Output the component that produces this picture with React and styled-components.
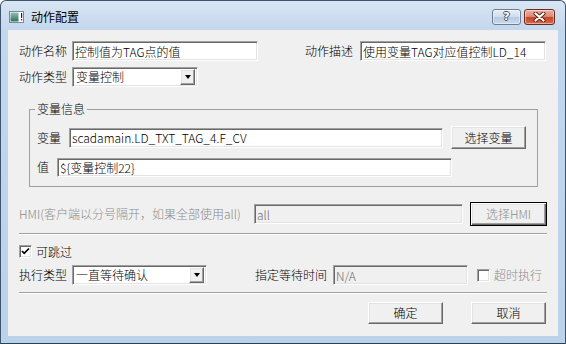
import React from 'react';
import styled, { createGlobalStyle, css } from 'styled-components';

const UI = `"Noto Sans CJK SC", "Noto Sans", "Liberation Sans", sans-serif`;

const Global = createGlobalStyle`
  html, body { margin: 0; padding: 0; background: #ffffff; }
  body { font-family: ${UI}; font-size: 12px; color: #000; }
  * { box-sizing: border-box; }
`;

const sunken = css`
  border: 1px solid;
  border-color: #a0a0a0 #ffffff #ffffff #a0a0a0;
  box-shadow: inset 1px 1px 0 #696969, inset -1px -1px 0 #e3e3e3;
`;

const raised = css`
  border: 1px solid;
  border-color: #ffffff #696969 #696969 #ffffff;
  box-shadow: inset -1px -1px 0 #a0a0a0, inset 1px 1px 0 #e3e3e3;
`;

const Window = styled.div`
  width: 566px;
  height: 344px;
  border: 1px solid #3e5570;
  border-bottom-color: #24434f;
  border-radius: 6px 6px 0 0;
  background: linear-gradient(180deg, #d9e5f3 0px, #c3d7ed 29px, #bcd2ea 100%);
  padding: 0 7px 7px 7px;
  display: flex;
  flex-direction: column;
  overflow: hidden;
`;

const TitleBar = styled.div`
  height: 29px;
  padding-top: 3px;
  display: flex;
  align-items: center;
`;

const TitleIcon = styled.svg`
  width: 15px;
  height: 12px;
  margin-left: 1px;
  flex: none;
`;

const TitleText = styled.span`
  margin-left: 7px;
  font-size: 12px;
  line-height: 14px;
  color: #000;
  flex: 1;
`;

const CaptionButton = styled.div`
  width: ${(p) => p.$w}px;
  height: 16px;
  border-radius: 3px;
  display: flex;
  align-items: center;
  justify-content: center;
  margin-left: ${(p) => p.$gap || 0}px;
  margin-right: ${(p) => p.$mr || 0}px;
  border: 1px solid ${(p) => (p.$close ? '#6a2a20' : '#6d7e93')};
  background: ${(p) =>
    p.$close
      ? 'linear-gradient(180deg, #eab0a2 0%, #dc8b77 46%, #c4472d 52%, #d66a45 100%)'
      : 'linear-gradient(180deg, #e6eef7 0%, #d2deec 46%, #b8cadf 52%, #cadaec 100%)'};
  box-shadow: inset 0 0 0 1px rgba(255, 255, 255, 0.45);
`;

const HelpGlyph = styled.span`
  font-family: "DejaVu Sans", sans-serif;
  font-weight: bold;
  font-size: 11px;
  line-height: 12px;
  color: #fff;
  text-shadow: 1px 0 0 #3d526b, -1px 0 0 #3d526b, 0 1px 0 #3d526b, 0 -1px 0 #3d526b;
`;

const Client = styled.div`
  flex: 1;
  background: #f0f0f0;
  padding: 11px 11px 0 11px;
  display: flex;
  flex-direction: column;
  font-weight: 300;
`;

const Row = styled.div`
  display: flex;
  align-items: center;
  height: ${(p) => p.$h || 20}px;
  margin-top: ${(p) => p.$mt || 0}px;
  padding-left: ${(p) => p.$pl || 0}px;
  padding-right: ${(p) => p.$pr || 0}px;
  justify-content: ${(p) => p.$justify || 'flex-start'};
  gap: ${(p) => p.$gap || 0}px;
`;

const Label = styled.span`
  width: ${(p) => (p.$w ? `${p.$w}px` : 'auto')};
  margin-left: ${(p) => p.$ml || 0}px;
  flex: none;
  font-size: 12px;
  line-height: 14px;
  white-space: nowrap;
  color: ${(p) => (p.$disabled ? '#8b8b8b' : '#000')};
`;

const TextField = styled.input`
  ${sunken};
  width: ${(p) => p.$w}px;
  height: ${(p) => p.$h || 20}px;
  margin-left: ${(p) => p.$ml || 0}px;
  flex: none;
  padding: 0 2px;
  font-family: ${UI};
  font-size: 12px;
  font-weight: 300;
  outline: none;
  background: ${(p) => (p.disabled ? '#f0f0f0' : '#ffffff')};
  color: ${(p) => (p.disabled ? '#6d6d6d' : '#000')};
  -webkit-text-fill-color: ${(p) => (p.disabled ? '#6d6d6d' : '#000')};
`;

const Combo = styled.div`
  ${sunken};
  width: ${(p) => p.$w}px;
  height: 20px;
  flex: none;
  background: #fff;
  display: flex;
  align-items: center;
  padding: 2px;
`;

const ComboText = styled.span`
  flex: 1;
  padding-left: 1px;
  font-size: 12px;
  line-height: 14px;
  white-space: nowrap;
`;

const ComboArrow = styled.span`
  ${raised};
  width: 15px;
  height: 16px;
  background: #f0f0f0;
  display: flex;
  align-items: center;
  justify-content: center;
`;

const Triangle = styled.span`
  width: 0;
  height: 0;
  border-left: 3.5px solid transparent;
  border-right: 3.5px solid transparent;
  border-top: 4px solid #000;
`;

const GroupBox = styled.fieldset`
  width: 509px;
  margin: 14px 0 0 10px;
  min-width: 0;
  border: 1px solid #a0a0a0;
  padding: 9px 5px 9px 5px;
`;

const Legend = styled.legend`
  padding: 0 2px;
  font-size: 12px;
  line-height: 16px;
`;

const PushButton = styled.button`
  ${raised};
  width: ${(p) => p.$w}px;
  height: ${(p) => p.$h}px;
  margin-left: ${(p) => p.$ml || 0}px;
  flex: none;
  background: #f0f0f0;
  padding: 0;
  font-family: ${UI};
  font-size: 12px;
  font-weight: 300;
  line-height: 14px;
  color: ${(p) => (p.$disabled ? '#8d8d8d' : '#000')};
  ${(p) =>
    p.$default &&
    css`
      border: 1px solid #000;
      box-shadow: inset 1px 1px 0 #ffffff, inset -1px -1px 0 #696969, inset -2px -2px 0 #a0a0a0,
        inset 2px 2px 0 #e3e3e3;
    `}
`;

const Separator = styled.div`
  height: 2px;
  margin-top: 7px;
  border-top: 1px solid #a0a0a0;
  border-bottom: 1px solid #ffffff;
  flex: none;
`;

const CheckBox = styled.span`
  ${sunken};
  width: 13px;
  height: 13px;
  margin-left: ${(p) => p.$ml || 0}px;
  flex: none;
  background: #fff;
  display: flex;
  align-items: center;
  justify-content: center;
`;

function Check() {
  return (
    <svg width="9" height="9" viewBox="0 0 9 9">
      <path d="M1 4 L3.2 6.3 L8 1.5" fill="none" stroke="#000" strokeWidth="1.7" />
    </svg>
  );
}

function AppIcon() {
  return (
    <TitleIcon viewBox="0 0 15 12">
      <defs>
        <linearGradient id="ig" x1="0" y1="0" x2="0" y2="1">
          <stop offset="0" stopColor="#8fc2b0" />
          <stop offset="1" stopColor="#2f6f63" />
        </linearGradient>
      </defs>
      <rect x="0.5" y="0.5" width="14" height="11" fill="#ffffff" stroke="#7b8896" />
      <rect x="1.5" y="1.5" width="8" height="9" fill="url(#ig)" />
      <rect x="12" y="2" width="1.2" height="5" fill="#222" />
      <rect x="12" y="8" width="1.2" height="1.4" fill="#222" />
    </TitleIcon>
  );
}

function CloseGlyph() {
  return (
    <svg width="13" height="10" viewBox="0 0 13 10">
      <path d="M2.5 1.5 L10.5 8.5 M10.5 1.5 L2.5 8.5" stroke="#5b1d12" strokeWidth="4" strokeLinecap="round" />
      <path d="M2.5 1.5 L10.5 8.5 M10.5 1.5 L2.5 8.5" stroke="#ffffff" strokeWidth="2.2" strokeLinecap="round" />
    </svg>
  );
}

function DropDown({ width, text }) {
  return (
    <Combo $w={width}>
      <ComboText>{text}</ComboText>
      <ComboArrow>
        <Triangle />
      </ComboArrow>
    </Combo>
  );
}

export default function App() {
  return (
    <>
      <Global />
      <Window>
        <TitleBar>
          <AppIcon />
          <TitleText>动作配置</TitleText>
          <CaptionButton $w={29}>
            <HelpGlyph>?</HelpGlyph>
          </CaptionButton>
          <CaptionButton $w={31} $gap={3} $mr={3} $close>
            <CloseGlyph />
          </CaptionButton>
        </TitleBar>
        <Client>
          <Row>
            <Label $w={53}>动作名称</Label>
            <TextField $w={186} readOnly defaultValue="控制值为TAG点的值" />
            <Label $w={55} $ml={47}>动作描述</Label>
            <TextField $w={186} readOnly defaultValue="使用变量TAG对应值控制LD_14" />
          </Row>
          <Row $mt={6}>
            <Label $w={53}>动作类型</Label>
            <DropDown width={126} text="变量控制" />
          </Row>

          <GroupBox>
            <Legend>变量信息</Legend>
            <Row $h={23} $pl={2}>
              <Label $w={32}>变量</Label>
              <TextField $w={374} readOnly defaultValue="scadamain.LD_TXT_TAG_4.F_CV" />
              <PushButton $w={75} $h={23} $ml={8}>选择变量</PushButton>
            </Row>
            <Row $mt={8} $pl={2}>
              <Label $w={20}>值</Label>
              <TextField $w={395} $h={19} readOnly defaultValue="${变量控制22}" />
            </Row>
          </GroupBox>

          <Row $h={24} $mt={15}>
            <Label $w={235} $disabled>HMI(客户端以分号隔开，如果全部使用all)</Label>
            <TextField $w={209} disabled defaultValue="all" />
            <PushButton $w={77} $h={24} $ml={7} $default $disabled>选择HMI</PushButton>
          </Row>

          <Separator />

          <Row $h={13} $mt={10}>
            <CheckBox>
              <Check />
            </CheckBox>
            <Label $ml={4}>可跳过</Label>
          </Row>

          <Row $mt={7}>
            <Label $w={53}>执行类型</Label>
            <DropDown width={135} text="一直等待确认" />
            <Label $ml={48}>指定等待时间</Label>
            <TextField $w={135} $ml={6} disabled defaultValue="N/A" />
            <CheckBox $ml={9} />
            <Label $ml={4} $disabled>超时执行</Label>
          </Row>

          <Separator />

          <Row $h={22} $mt={8} $justify="flex-end" $pr={1} $gap={28}>
            <PushButton $w={75} $h={22}>确定</PushButton>
            <PushButton $w={75} $h={22}>取消</PushButton>
          </Row>
        </Client>
      </Window>
    </>
  );
}
